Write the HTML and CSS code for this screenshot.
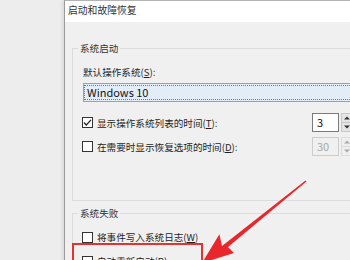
FILE: index.html
```html
<!DOCTYPE html>
<html>
<head>
<meta charset="utf-8">
<link rel="stylesheet" href="styles.css">
</head>
<body>
<div class="desk">
  <div class="dialog">
    <div class="titlebar">启动和故障恢复</div>
    <div class="content">
      <fieldset class="group g1">
        <legend>系统启动</legend>
        <div class="label">默认操作系统(<u>S</u>):</div>
        <div class="combo"><span class="combo-text">Windows 10</span></div>
        <div class="row r1">
          <span class="cb"><svg viewBox="0 0 11 11" width="11" height="11"><path d="M2 5.5 L4.3 8 L9 2.8" fill="none" stroke="#222" stroke-width="1.2"/></svg></span>
          <span class="txt">显示操作系统列表的时间(<u>T</u>):</span>
          <div class="spin">
            <div class="spin-box">3</div>
            <div class="spin-btns">
              <span class="sb"><svg viewBox="0 0 6 4" width="6" height="4"><path d="M0 3.5 L3 0.5 L6 3.5Z" fill="#333"/></svg></span>
              <span class="sb"><svg viewBox="0 0 6 4" width="6" height="4"><path d="M0 0.5 L3 3.5 L6 0.5Z" fill="#333"/></svg></span>
            </div>
          </div>
        </div>
        <div class="row r2">
          <span class="cb"></span>
          <span class="txt">在需要时显示恢复选项的时间(<u>D</u>):</span>
          <div class="spin disabled">
            <div class="spin-box">30</div>
            <div class="spin-btns">
              <span class="sb"><svg viewBox="0 0 6 4" width="6" height="4"><path d="M0 3.5 L3 0.5 L6 3.5Z" fill="#aaa"/></svg></span>
              <span class="sb"><svg viewBox="0 0 6 4" width="6" height="4"><path d="M0 0.5 L3 3.5 L6 0.5Z" fill="#aaa"/></svg></span>
            </div>
          </div>
        </div>
      </fieldset>
      <fieldset class="group g2">
        <legend>系统失败</legend>
        <div class="row r3">
          <span class="cb"></span>
          <span class="txt">将事件写入系统日志(<u>W</u>)</span>
        </div>
        <div class="row r4">
          <span class="cb"></span>
          <span class="txt">自动重新启动(<u>R</u>)</span>
        </div>
      </fieldset>
    </div>
  </div>
  <div class="redbox"></div>
  <svg class="arrow" width="350" height="260" viewBox="0 0 350 260">
    <path d="M306.5 181.5 L305.5 180.5 L222 246 L219.4 234.2 L202 263 L234 253 L228 247 Z" fill="#e8262b"/>
  </svg>
</div>
</body>
</html>
```

FILE: styles.css
```css
html, body {
  margin: 0;
  padding: 0;
}
body {
  background: #ededed;
  font-family: "Noto Sans CJK SC", "Noto Sans", sans-serif;
  font-size: 9.6px;
  color: #1e1e1e;
}
.desk {
  position: relative;
  width: 350px;
  height: 260px;
  overflow: hidden;
  background: #ededed;
}
.dialog {
  margin-left: 64px;
  width: 310px;
  height: 300px;
  background: #f0f0f0;
  border-left: 1px solid #9a9a9a;
  border-top: 1px solid #b4b4b4;
  box-shadow: -2px 0 3px rgba(0,0,0,0.08);
}
.titlebar {
  height: 21px;
  line-height: 19px;
  background: #ffffff;
  padding-left: 3px;
  font-size: 9.8px;
  color: #333;
}
.content {
  padding-left: 7px;
}
.group {
  margin: 0;
  border: 1px solid #dcdcdc;
  padding: 0 10px 0 10px;
  width: 269px;
}
.group legend {
  padding: 0 2px;
  margin-left: -5px;
  line-height: 12px;
  font-size: 9.6px;
  color: #333;
}
.g1 {
  margin-top: 20px;
  padding-bottom: 44px;
}
.g2 {
  margin-top: 6px;
  padding-bottom: 20px;
}
.label {
  margin-top: 11px;
  line-height: 14px;
}
u {
  text-decoration: underline;
  text-underline-offset: 1px;
}
.combo {
  margin-top: 4px;
  height: 17px;
  border: 1px solid #7fa6d6;
  background: #e3edf8;
  display: flex;
  align-items: center;
  padding-left: 1px;
}
.combo-text {
  font-size: 11px;
  line-height: 13px;
  padding: 0 2px;
  outline: 1px dotted #777;
  outline-offset: 0;
  width: 262px;
  color: #111;
}
.row {
  display: flex;
  align-items: center;
  height: 19px;
}
.r1 { margin-top: 11px; }
.r2 { margin-top: 5px; }
.r3 { margin-top: 11px; height: 14px; }
.r4 { margin-top: 10px; height: 14px; }
.cb {
  width: 9px;
  height: 9px;
  border: 1px solid #333;
  background: #fff;
  margin-left: -1px;
  margin-right: 4px;
  flex: none;
  position: relative;
}
.cb svg {
  position: absolute;
  left: -1px;
  top: -1px;
}
.txt {
  line-height: 14px;
  white-space: nowrap;
}
.spin {
  margin-left: auto;
  display: flex;
  height: 19px;
}
.spin-box {
  width: 21px;
  height: 17px;
  border: 1px solid #7a7a7a;
  background: #fff;
  font-size: 11px;
  line-height: 17px;
  padding-left: 4px;
  color: #111;
}
.spin-btns {
  margin-left: 2px;
  width: 11px;
  display: flex;
  flex-direction: column;
}
.sb {
  flex: 1;
  background: #e5e5e5;
  border: 1px solid #c8c8c8;
  display: flex;
  align-items: center;
  justify-content: center;
}
.sb + .sb {
  border-top: none;
}
.disabled .spin-box {
  border-color: #cccccc;
  background: #f0f0f0;
  color: #a8a8a8;
}
.disabled .sb {
  background: #efefef;
  border-color: #dcdcdc;
}
.redbox {
  position: absolute;
  left: 72px;
  top: 243px;
  width: 127px;
  height: 30px;
  border: 2px solid #e5312f;
}
.arrow {
  position: absolute;
  left: 0;
  top: 0;
  pointer-events: none;
}
```
